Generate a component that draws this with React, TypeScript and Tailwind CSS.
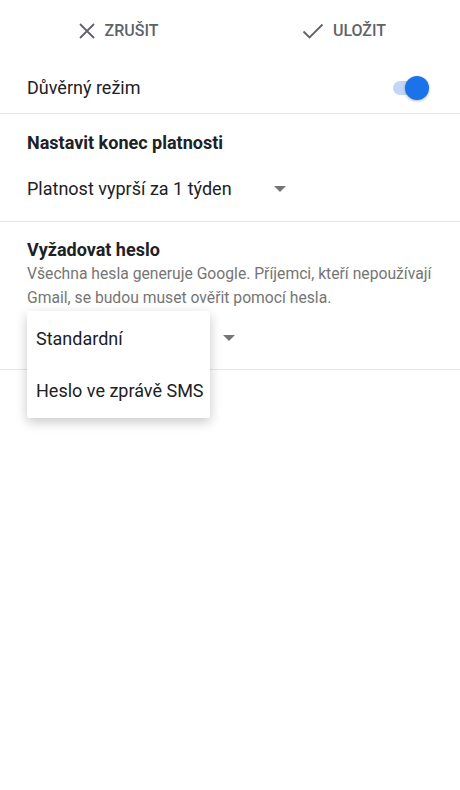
const font = { fontFamily: "Roboto, 'Noto Sans', sans-serif" }

function Caret() {
  return (
    <svg width="12" height="6" viewBox="0 0 12 6" className="shrink-0">
      <path d="M0 0h12L6 6z" fill="#757575" />
    </svg>
  )
}

function Toggle() {
  return (
    <div className="relative w-[38px] h-[24px] flex items-center">
      <div className="w-[30px] h-[14px] rounded-full bg-[#c2d7f8] ml-[2px]" />
      <div className="absolute right-0 top-0 w-[24px] h-[24px] rounded-full bg-[#1a73e8] shadow-[0_1px_3px_rgba(0,0,0,0.3)]" />
    </div>
  )
}

export default function App() {
  return (
    <div className="w-[460px] h-[790px] bg-white text-[#202124] relative overflow-hidden" style={font}>
      <header className="grid grid-cols-2 h-[62px] items-center text-[16px] font-medium text-[#5f6368]">
        <div className="flex items-center justify-center gap-[9px] pl-[6px]">
          <svg width="18" height="18" viewBox="0 0 18 18">
            <path d="M2 2l14 14M16 2L2 16" stroke="#5f6368" strokeWidth="1.8" fill="none" />
          </svg>
          <span>ZRUŠIT</span>
        </div>
        <div className="flex items-center justify-center gap-[9px] pr-[2px]">
          <svg width="22" height="18" viewBox="0 0 22 18">
            <path d="M1.5 9.5l6 6L20.5 2.5" stroke="#5f6368" strokeWidth="1.8" fill="none" />
          </svg>
          <span>ULOŽIT</span>
        </div>
      </header>

      <div className="flex items-center justify-between h-[52px] pl-[27px] pr-[31px] border-b border-[#e6e6e6]">
        <span className="text-[18px]">Důvěrný režim</span>
        <Toggle />
      </div>

      <section className="pl-[27px] pr-[27px] pt-[17px] pb-[20px] border-b border-[#e6e6e6]">
        <h2 className="text-[18px] font-bold leading-[24px]">Nastavit konec platnosti</h2>
        <div className="mt-[22px] flex items-center gap-[42px] h-[24px]">
          <span className="text-[18px] leading-[24px]">Platnost vyprší za 1 týden</span>
          <Caret />
        </div>
      </section>

      <section className="relative pl-[27px] pr-[20px] pt-[16px] pb-[19px] border-b border-[#e6e6e6]">
        <h2 className="text-[18px] font-bold leading-[24px]">Vyžadovat heslo</h2>
        <p className="text-[15.7px] leading-[24px] text-[#757575]">
          Všechna hesla generuje Google. Příjemci, kteří nepoužívají Gmail, se budou muset ověřit pomocí hesla.
        </p>
        <div className="mt-[16px] flex items-center h-[24px]">
          <span className="text-[18px] leading-[24px] w-[196px]">Standardní</span>
          <Caret />
        </div>
        <div className="absolute left-[27px] top-[89px] w-[183px] bg-white rounded-[2px] shadow-[0_4px_12px_rgba(0,0,0,0.22)] py-[1px]">
          <div className="h-[52px] flex items-center pl-[9px] text-[18px]">Standardní</div>
          <div className="h-[53px] flex items-center pl-[9px] text-[18px]">Heslo ve zprávě SMS</div>
        </div>
      </section>
    </div>
  )
}
